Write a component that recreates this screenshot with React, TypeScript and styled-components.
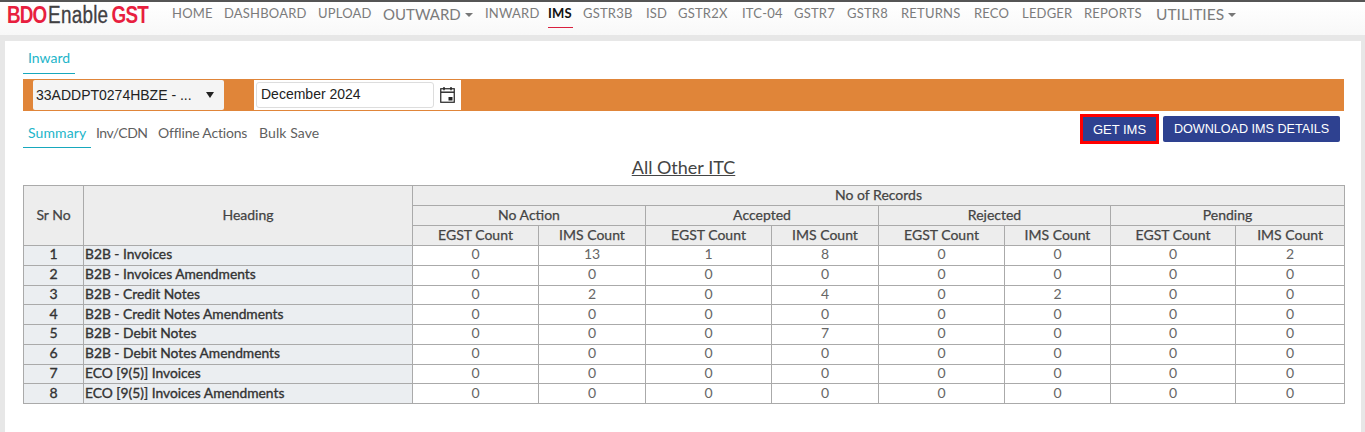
import React from "react";
import styled, { createGlobalStyle } from "styled-components";

const Global = createGlobalStyle`
  html, body { margin: 0; padding: 0; background: #e7e7e7; overflow: hidden; }
  body { font-family: Lato, "Open Sans", sans-serif; }
  * { box-sizing: border-box; }
`;
const Page = styled.div`width: 1365px; height: 432px; overflow: hidden; background: #e7e7e7;`;
const Navbar = styled.header`
  height: 35px; border-top: 2px solid #555; background: linear-gradient(#fff, #f8f8f8);
  display: flex; align-items: flex-start; padding-left: 7px;
`;
const Logo = styled.div`
  width: 165px; height: 33px; flex: none; display: flex; align-items: center; padding-bottom: 6px;
`;
const LogoMark = styled.div`
  flex: none; white-space: nowrap; transform: scaleX(0.82); transform-origin: left center;
  font-family: "Liberation Sans", sans-serif; font-size: 23px; line-height: 1;
`;
const LogoRed = styled.span`
  color: #e81f3f; font-weight: 700; margin-right: ${p => p.$gap ?? 0}px; letter-spacing: -1px;
`;
const LogoDark = styled.span`
  color: #414042; margin-right: 4px; letter-spacing: 0.3px; -webkit-text-stroke: 0.3px #414042;
`;
const NavList = styled.nav`display: flex; align-items: flex-start;`;
const NavItem = styled.a`
  height: 25px; width: ${p => p.$w}px; padding-top: 3px; white-space: nowrap;
  font-size: ${p => p.$size ?? 13}px; line-height: ${p => (p.$size ? 19 : 16)}px; letter-spacing: ${p => (p.$size ? 0 : 0.2)}px;
  color: ${p => (p.$active ? "#111" : "#7b7b7b")}; font-weight: ${p => (p.$active ? 700 : 400)};
  display: flex; align-items: flex-start; gap: 4px;
`;
const ActiveMark = styled.span`
  display: block; height: 23px; width: 25px; border-bottom: 1px solid #d9203f;
`;
const Caret = styled.i`
  display: inline-block; width: 0; height: 0; margin-top: 8px; border-left: 4px solid transparent;
  border-right: 4px solid transparent; border-top: 4px solid #777;
`;
const Card = styled.main`
  margin: 6px 4px 0 5px; height: 391px; background: #fff; padding: 0 17px 0 18px;
`;
const Tabs = styled.div`display: flex; height: 38px; padding-top: 6px;`;
const Tab = styled.a`
  height: 27px; padding: 3px 5px 0; line-height: 16px; font-size: 14px; white-space: nowrap;
  color: #22b5c9; border-bottom: 1px solid #17a8bd;
`;
const Bar = styled.div`
  height: 32px; background: #e08539; display: flex; align-items: center; padding-left: 10px;
`;
const Select = styled.div`
  width: 191px; height: 30px; background: #f4f4f4; border-radius: 2px; display: flex; align-items: center;
  padding: 0 10px 1px 3px; justify-content: space-between; color: #222;
  font-family: "Liberation Sans", sans-serif; font-size: 14px;
`;
const SelectCaret = styled.i`
  width: 0; height: 0; border-left: 4px solid transparent; border-right: 4px solid transparent;
  border-top: 6px solid #222;
`;
const DateBox = styled.div`
  margin-left: 30px; width: 207px; height: 30px; background: #fff; display: flex; align-items: center; padding-left: 2px;
`;
const DateInput = styled.div`
  width: 178px; height: 26px; border: 1px solid #ddd; border-radius: 3px; padding-left: 4px; line-height: 23px;
  font-family: "Liberation Sans", sans-serif; font-size: 14px; color: #222;
`;
const IconCell = styled.div`flex: 1; display: flex; justify-content: center; color: #222;`;
const ActionRow = styled.div`display: flex; justify-content: space-between; height: 39px;`;
const SubTabs = styled.div`display: flex; padding-top: 10px;`;
const SubTab = styled.a`
  height: 27px; width: ${p => p.$w}px; padding: 4px 5px 0; line-height: 16px; font-size: 14px; white-space: nowrap;
  letter-spacing: ${p => p.$ls ?? 0.1}px;
  color: ${p => (p.$active ? "#22b5c9" : "#5f5f5f")};
  border-bottom: ${p => (p.$active ? "1px solid #17a8bd" : "none")};
`;
const Buttons = styled.div`display: flex; align-items: center; gap: 4px; padding: 3px 4px 0 0; height: 33px;`;
const Button = styled.button`
  height: ${p => (p.$focus ? 30 : 26)}px; width: ${p => (p.$focus ? 79 : 177)}px;
  background: #2e4190; color: #fff; padding: 0; border-radius: ${p => (p.$focus ? 0 : 2)}px;
  border: ${p => (p.$focus ? "3px solid #f00" : "none")};
  font-family: "Liberation Sans", sans-serif; font-size: ${p => (p.$focus ? 13 : 12.6)}px; white-space: nowrap;
`;
const Title = styled.h2`
  margin: 0; height: 35px; padding-top: 5px; text-align: center; font-weight: 400; font-size: 18px; line-height: 24px;
  color: #444; text-decoration: underline;
`;
const Table = styled.table`
  width: 1321px; table-layout: fixed; border-collapse: collapse; font-size: 14px; color: #444;
  th, td { border: 1px solid #aaa; padding: 0 0 3px; text-align: center; white-space: nowrap; overflow: hidden; }
`;
const Th = styled.th`
  background: #ededed; height: 20px; line-height: 15px; font-weight: 400; color: #444;
  -webkit-text-stroke: 0.25px #444;
`;
const RowNo = styled.td`
  background: #ebeef1; height: 19.75px; line-height: 15px; font-weight: 400; color: #333; -webkit-text-stroke: 0.35px #333;
`;
const RowHead = styled.td`
  background: #ebeef1; line-height: 15px; font-weight: 400; font-size: 13.8px; color: #333; -webkit-text-stroke: 0.35px #333;
  && { text-align: left; padding-left: 1px; }
`;
const Num = styled.td`background: #fff; line-height: 15px; color: #666;`;

type NavDef = { t: string; w: number; size?: number; caret?: boolean; active?: boolean };
const nav: NavDef[] = [
  { t: "HOME", w: 52 }, { t: "DASHBOARD", w: 94 }, { t: "UPLOAD", w: 65 },
  { t: "OUTWARD", w: 102, size: 15, caret: true }, { t: "INWARD", w: 63 }, { t: "IMS", w: 35, active: true },
  { t: "GSTR3B", w: 63 }, { t: "ISD", w: 32 }, { t: "GSTR2X", w: 64 }, { t: "ITC-04", w: 52 },
  { t: "GSTR7", w: 53 }, { t: "GSTR8", w: 54 }, { t: "RETURNS", w: 73 }, { t: "RECO", w: 48 },
  { t: "LEDGER", w: 62 }, { t: "REPORTS", w: 72 }, { t: "UTILITIES", w: 90, size: 15.5, caret: true },
];
const rows: [string, number[]][] = [
  ["B2B - Invoices", [0, 13, 1, 8, 0, 0, 0, 2]],
  ["B2B - Invoices Amendments", [0, 0, 0, 0, 0, 0, 0, 0]],
  ["B2B - Credit Notes", [0, 2, 0, 4, 0, 2, 0, 0]],
  ["B2B - Credit Notes Amendments", [0, 0, 0, 0, 0, 0, 0, 0]],
  ["B2B - Debit Notes", [0, 0, 0, 7, 0, 0, 0, 0]],
  ["B2B - Debit Notes Amendments", [0, 0, 0, 0, 0, 0, 0, 0]],
  ["ECO [9(5)] Invoices", [0, 0, 0, 0, 0, 0, 0, 0]],
  ["ECO [9(5)] Invoices Amendments", [0, 0, 0, 0, 0, 0, 0, 0]],
];
const widths = [60, 329, 126, 107, 126, 107, 126, 106, 125, 109];
const groups = ["No Action", "Accepted", "Rejected", "Pending"];

export default function App() {
  return (
    <Page>
      <Global />
      <Navbar>
        <Logo>
          <LogoMark>
            <LogoRed $gap={2}>BDO</LogoRed><LogoDark>Enable</LogoDark><LogoRed>GST</LogoRed>
          </LogoMark>
        </Logo>
        <NavList>
          {nav.map(n => (
            <NavItem key={n.t} $w={n.w} $size={n.size} $active={n.active}>
              {n.active ? <ActiveMark>{n.t}</ActiveMark> : n.t}
              {n.caret && <Caret />}
            </NavItem>
          ))}
        </NavList>
      </Navbar>
      <Card>
        <Tabs><Tab>Inward</Tab></Tabs>
        <Bar>
          <Select>33ADDPT0274HBZE - ...<SelectCaret /></Select>
          <DateBox>
            <DateInput>December 2024</DateInput>
            <IconCell>
              <svg width="15" height="16" viewBox="0 0 15 16" fill="none" stroke="currentColor">
                <rect x="0.75" y="1.75" width="13.5" height="13.5" strokeWidth="1.2" />
                <path d="M1 5.2h13" strokeWidth="1.4" />
                <path d="M4 0v3.2M11 0v3.2" strokeWidth="1.4" />
                <rect x="8.5" y="10" width="4" height="3.5" fill="currentColor" stroke="none" />
              </svg>
            </IconCell>
          </DateBox>
        </Bar>
        <ActionRow>
          <SubTabs>
            <SubTab $active $w={68}>Summary</SubTab>
            <SubTab $w={62} $ls={-0.5}>Inv/CDN</SubTab>
            <SubTab $w={101} $ls={-0.2}>Offline Actions</SubTab>
            <SubTab $w={72}>Bulk Save</SubTab>
          </SubTabs>
          <Buttons>
            <Button $focus>GET IMS</Button>
            <Button>DOWNLOAD IMS DETAILS</Button>
          </Buttons>
        </ActionRow>
        <Title>All Other ITC</Title>
        <Table>
          <colgroup>{widths.map((w, i) => <col key={i} style={{ width: w }} />)}</colgroup>
          <thead>
            <tr>
              <Th rowSpan={3}>Sr No</Th>
              <Th rowSpan={3}>Heading</Th>
              <Th colSpan={8}>No of Records</Th>
            </tr>
            <tr>{groups.map(g => <Th key={g} colSpan={2}>{g}</Th>)}</tr>
            <tr>{groups.map(g => (
              <React.Fragment key={g}><Th>EGST Count</Th><Th>IMS Count</Th></React.Fragment>
            ))}</tr>
          </thead>
          <tbody>
            {rows.map(([h, vals], i) => (
              <tr key={h}>
                <RowNo>{i + 1}</RowNo>
                <RowHead>{h}</RowHead>
                {vals.map((v, j) => <Num key={j}>{v}</Num>)}
              </tr>
            ))}
          </tbody>
        </Table>
      </Card>
    </Page>
  );
}
